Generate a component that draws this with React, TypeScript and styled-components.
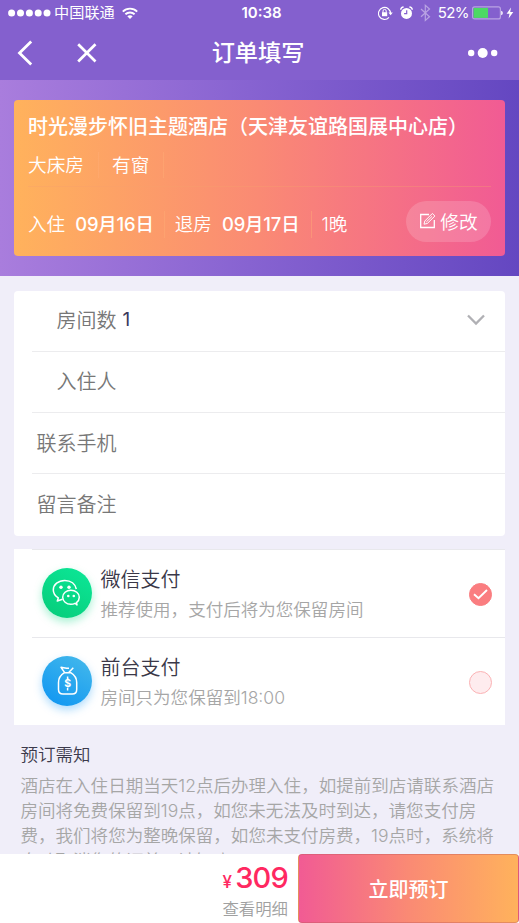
import React from "react";
import styled, { createGlobalStyle } from "styled-components";

const GlobalStyle = createGlobalStyle`
  * { box-sizing: border-box; }
  html, body { margin: 0; padding: 0; }
  body {
    font-family: Inter, "Noto Sans CJK SC", sans-serif;
    font-weight: 350;
    color: #3c3a4c;
    background: #f0eef9;
  }
  svg { display: block; flex: none; }
`;

const Screen = styled.div`
  width: 519px;
  height: 923px;
  display: flex;
  flex-direction: column;
  overflow: hidden;
  background: #f0eef9;
  white-space: nowrap;
`;

const StatusBar = styled.div`
  height: 26px;
  flex: none;
  display: grid;
  grid-template-columns: 1fr auto 1fr;
  align-items: center;
  padding: 0 5px 0 8px;
  background: #8460ce;
  color: #fff;
  font-size: 15px;
  line-height: 26px;
`;

const StatusGroup = styled.div<{ $end?: boolean }>`
  display: flex;
  align-items: center;
  justify-content: ${(p) => (p.$end ? "flex-end" : "flex-start")};
`;

const Carrier = styled.span`
  margin: 0 7px 0 3px;
  font-weight: 400;
  font-size: 15.2px;
`;

const Clock = styled.span`
  font-weight: 600;
  font-size: 15px;
  padding-left: 1px;
`;

const StatusIcons = styled.div`
  display: flex;
  align-items: center;
  gap: 7px;
`;

const Percent = styled.span`
  margin: 0 3px 0 7px;
  font-weight: 400;
  font-size: 15px;
  letter-spacing: -0.6px;
`;

const BoltSlot = styled.span`
  margin-left: 3px;
`;

const NavBar = styled.div`
  height: 54px;
  flex: none;
  display: grid;
  grid-template-columns: 1fr auto 1fr;
  align-items: center;
  padding: 0 21px 0 17px;
  background: #8460ce;
  color: #fff;
`;

const NavTitle = styled.h1`
  margin: 0;
  padding-left: 1px;
  font-size: 23.2px;
  font-weight: 500;
  line-height: 54px;
`;

const NavGroup = styled.div<{ $end?: boolean }>`
  display: flex;
  align-items: center;
  gap: 44px;
  justify-content: ${(p) => (p.$end ? "flex-end" : "flex-start")};
`;

const Hero = styled.section`
  height: 196px;
  flex: none;
  padding: 20px 14px;
  background: linear-gradient(90deg, #a97ddd 0%, #8763d1 48%, #6447c1 100%);
`;

const HotelCard = styled.div`
  height: 156px;
  padding: 12px 14px 0;
  border-radius: 4px;
  color: #fff;
  background: linear-gradient(90deg, #ffb25c 0%, #fa8a74 50%, #f15b94 100%);
`;

const HotelName = styled.h2`
  margin: 0;
  padding-top: 1px;
  font-size: 20px;
  font-weight: 500;
  line-height: 29px;
`;

const RoomRow = styled.div`
  height: 45px;
  padding: 10px 0 8px;
  display: flex;
  border-bottom: 1px solid rgba(245, 160, 110, 0.35);
`;

const RoomTag = styled.span`
  padding-right: 14px;
  margin-right: 13px;
  border-right: 1px solid rgba(255, 176, 120, 0.4);
  font-size: 18.7px;
  line-height: 27px;
`;

const StayRow = styled.div`
  display: flex;
  align-items: flex-start;
  padding-top: 14px;
`;

const StayItem = styled.span`
  height: 27px;
  margin-top: 10px;
  display: flex;
  padding-right: 10px;
  margin-right: 9.5px;
  border-right: 1px solid rgba(255, 176, 120, 0.4);
  font-size: 18.6px;
  line-height: 27px;
  &:nth-child(3) { border-right: 0; }
`;

const StayDate = styled.b`
  margin-left: 10px;
  width: 79px;
  font-weight: 500;
  font-size: 18.4px;
  letter-spacing: -0.15px;
`;

const EditButton = styled.button`
  width: 85px;
  height: 41px;
  margin-left: auto;
  padding: 0 0 3px;
  display: flex;
  align-items: center;
  justify-content: center;
  gap: 4px;
  border: 0;
  border-radius: 21px;
  background: rgba(255, 255, 255, 0.16);
  color: #fff;
  font: inherit;
  font-size: 18.7px;
`;

const FormCard = styled.section`
  height: 245px;
  flex: none;
  margin: 14.5px 14px 0;
  padding-left: 18px;
  border-radius: 4px;
  background: #fff;
  display: grid;
  grid-template-rows: repeat(4, 1fr);
`;

const FormRow = styled.div`
  display: flex;
  align-items: center;
  padding: 0 20px 2px 3.5px;
  border-bottom: 1px solid #ececee;
  color: #777;
  font-size: 20px;
  &:last-child { border-bottom: 0; }
`;

const FormLabel = styled.span`
  width: 81px;
  text-align: right;
`;

const FormValue = styled.span`
  flex: 1;
  margin-left: 6px;
  color: #3c3a5c;
  font-weight: 400;
  font-size: 19px;
`;

const PayCard = styled.section`
  height: 176px;
  flex: none;
  margin: 13.5px 14px 0;
  padding-left: 18px;
  background: #fff;
`;

const PayRow = styled.div`
  height: 88px;
  display: flex;
  align-items: center;
  padding: 0 13px 0 10px;
  border-top: 1px solid #e8e8ec;
`;

const PayIcon = styled.div<{ $from: string; $to: string; $glow: string }>`
  width: 50px;
  height: 50px;
  margin: 0 8.5px 2px 0;
  border-radius: 50%;
  background: linear-gradient(30deg, ${(p) => p.$from}, ${(p) => p.$to});
  box-shadow: 0 4px 9px ${(p) => p.$glow};
`;

const PayText = styled.div`
  flex: 1;
  padding-top: 2px;
`;

const PayName = styled.div`
  font-size: 20px;
  line-height: 30px;
  color: #3a3848;
`;

const PayHint = styled.div`
  font-size: 17.55px;
  line-height: 29px;
  color: #a6a6a6;
`;

const Radio = styled.span<{ $on?: boolean }>`
  width: 23px;
  height: 23px;
  margin-top: 2px;
  display: grid;
  place-items: center;
  border-radius: 50%;
  border: 1px solid ${(p) => (p.$on ? "#fa7d80" : "#fbb2b4")};
  background: ${(p) => (p.$on ? "#fa7d80" : "#feecee")};
`;

const Notice = styled.section`
  flex: 1;
  min-height: 0;
  overflow: hidden;
  padding: 17px 20px 0 20.5px;
`;

const NoticeTitle = styled.h3`
  margin: 0;
  font-size: 17.5px;
  font-weight: 350;
  line-height: 26px;
`;

const NoticeLine = styled.p`
  margin: 0;
  padding-top: 4.5px;
  font-size: 17.55px;
  line-height: 25px;
  color: #a6a6a6;
  & + & { padding-top: 0; }
`;

const Footer = styled.footer`
  height: 69px;
  flex: none;
  display: flex;
  background: #fff;
`;

const PriceBlock = styled.div`
  width: 298px;
  padding-right: 10px;
  text-align: right;
`;

const Price = styled.div`
  height: 42px;
  line-height: 48px;
  color: #ff2861;
  font-size: 29px;
  font-weight: 500;
  letter-spacing: -0.8px;
`;

const Currency = styled.span`
  margin-right: 4px;
  font-size: 17px;
`;

const Detail = styled.div`
  font-size: 16.4px;
  line-height: 26px;
  color: #a0a0a0;
`;

const BookButton = styled.button`
  flex: 1;
  padding: 0 0 1px;
  border: 1px solid rgba(190, 90, 90, 0.4);
  border-radius: 4px;
  color: #fff;
  font: inherit;
  font-size: 20px;
  font-weight: 500;
  background: linear-gradient(90deg, #f15b94 0%, #fa8a74 50%, #ffb25c 100%);
`;

const SignalDots = () => (
  <svg width="43" height="10" fill="#fff">
    {[3.6, 12.5, 21.4, 30.2, 39].map((x) => (
      <circle key={x} cx={x} cy="5" r="3.5" />
    ))}
  </svg>
);

const Wifi = () => (
  <svg width="16" height="13" viewBox="0 0 16 13" fill="none" stroke="#fff" strokeWidth="1.9">
    <path d="M.8 4.6C4.8 .6 11.2 .6 15.2 4.6" />
    <path d="M3.4 7.3C6 4.8 10 4.8 12.6 7.3" />
    <path d="M5.3 9.2C6.9 7.8 9.1 7.8 10.7 9.2L8 12Z" fill="#fff" stroke="none" />
  </svg>
);

const RotationLock = () => (
  <svg width="15" height="14" viewBox="0 0 15 14" fill="none" stroke="#fff">
    <path d="M11 11.4A6 6 0 1 1 12.500 7.6" strokeWidth="1.1" />
    <path d="M10.500 6.600H14.800L12.600 9.200Z" fill="#fff" stroke="none" />
    <rect x="4" y="6.200" width="5.200" height="4" fill="#fff" stroke="none" />
    <path d="M5 6.500V5a1.600 1.600 0 0 1 3.200 0V6.500" />
  </svg>
);

const Alarm = () => (
  <svg width="13" height="14" viewBox="0 0 13 14" fill="none">
    <circle cx="6.5" cy="7.4" r="5.5" fill="#fff" />
    <path d="M.7 3.700A3 3 0 0 1 3.600 1M12.300 3.700A3 3 0 0 0 9.400 1" stroke="#fff" strokeWidth="1.400" />
    <path d="M6.700 4.200V7.700H4.100" stroke="#8460ce" strokeWidth="1.200" />
  </svg>
);

const Bluetooth = () => (
  <svg width="11" height="18" viewBox="0 0 11 18" fill="none" stroke="#b9a3e3" strokeWidth="1.200">
    <path d="M1 5L9.500 12.800L5.300 16.500V1.300L9.500 5L1 12.800" />
  </svg>
);

const Battery = () => (
  <svg width="31" height="14" viewBox="0 0 31 14" fill="none">
    <rect x=".6" y=".9" width="27.800" height="12" rx="2" stroke="#b9a3e3" strokeWidth="1.200" />
    <rect x="1.600" y="1.900" width="14.400" height="10" fill="#4cd964" />
    <path d="M29.200 4.800Q30.800 5 30.800 7T29.200 9.200Z" fill="#fff" />
  </svg>
);

const Bolt = () => (
  <svg width="8" height="12" viewBox="0 0 8 12" fill="#fff">
    <path d="M5 .5L.6 6.700H3.500L2.600 11.600L7.300 5H4.200Z" />
  </svg>
);

const Back = () => (
  <svg width="16" height="26" viewBox="0 0 16 26" fill="none" stroke="#fff" strokeWidth="2.800">
    <path d="M14.200 1.500L2.500 13L14.200 24.500" />
  </svg>
);

const Close = () => (
  <svg width="20" height="20" viewBox="0 0 20 20" fill="none" stroke="#fff" strokeWidth="2.700">
    <path d="M1.200 1.200L18.500 18.500M18.500 1.200L1.200 18.500" />
  </svg>
);

const More = () => (
  <svg width="31" height="12" viewBox="0 0 31 12" fill="#fff">
    <circle cx="4.200" cy="6" r="3.200" />
    <circle cx="15.700" cy="6" r="5" />
    <circle cx="27.200" cy="6" r="3.200" />
  </svg>
);

const Edit = () => (
  <svg width="17" height="17" viewBox="0 0 17 17" fill="none" stroke="#fff" strokeWidth="1.300">
    <path d="M10 2.500H1.700V15.500H15.300V8" />
    <path d="M5 12.200L5.800 9L13.300 1.500L15.900 4L8.300 11.500ZM7.300 10L13 4.400" strokeWidth="1" />
  </svg>
);

const Chevron = () => (
  <svg width="18" height="12" viewBox="0 0 18 12" fill="none" stroke="#b0b0b4" strokeWidth="2.300">
    <path d="M1 1.500L9 9.500L17 1.500" />
  </svg>
);

const Check = () => (
  <svg width="15" height="11" viewBox="0 0 15 11" fill="none" stroke="#fff" strokeWidth="1.900">
    <path d="M1 5.300L5.500 9.300L14 1" />
  </svg>
);

const WeChat = () => (
  <svg width="50" height="50" viewBox="0 0 50 50" fill="none" stroke="#fff" strokeWidth="1.500" strokeLinejoin="round">
    <path d="M20.500 31.300L15.300 33L16.300 29.800C13 27.800 11.300 25.300 11.300 22C11.300 16.500 16.300 12.400 22.800 12.400C29 12.400 33.300 16 34.300 21" />
    <path d="M33 35.300C31.800 36 30.300 36.300 28.900 36.300C24.300 36.300 20.700 33.200 20.700 29.200S24.300 22.200 28.900 22.200S37.300 25.300 37.300 29.200C37.300 31.500 36.300 33.200 34.500 34.600L35 37Z" />
    <g fill="#fff" stroke="none">
      <circle cx="19" cy="19.300" r="1.700" />
      <circle cx="27" cy="19.300" r="1.700" />
      <circle cx="26.300" cy="28" r="1.300" />
      <circle cx="31.800" cy="28" r="1.300" />
    </g>
  </svg>
);

const DollarText = styled.text`
  font: 700 10.5px Inter, sans-serif;
  fill: #fff;
  stroke: none;
  text-anchor: middle;
`;

const MoneyBag = () => (
  <svg width="50" height="50" viewBox="0 0 50 50" fill="none" stroke="#fff" strokeWidth="1.500" strokeLinejoin="round">
    <path d="M22.700 16.700L19 11.300L24.500 12.200H27M26.500 16.700L31.300 11.800M22.500 16.700H28.700C32.500 19 34.700 22 34.700 26.500V33.500Q34.700 38 30.300 38H21Q16.500 38 16.500 33.500V26.500C16.500 22 18.700 19 22.500 16.700" />
    <path d="M25.600 20.500V23M25.600 32V34.500" />
    <DollarText x="25.600" y="31.300">$</DollarText>
  </svg>
);

const formRows = [
  { label: "房间数", value: "1", expandable: true },
  { label: "入住人" },
  { label: "联系手机" },
  { label: "留言备注" },
];

const noticeLines = [
  "酒店在入住日期当天12点后办理入住，如提前到店请联系酒店",
  "房间将免费保留到19点，如您未无法及时到达，请您支付房",
  "费，我们将您为整晚保留，如您未支付房费，19点时，系统将",
  "自动取消您的订单，请知晓。",
];

export default function App() {
  return (
    <Screen lang="zh-CN">
      <GlobalStyle />
      <StatusBar>
        <StatusGroup>
          <SignalDots />
          <Carrier>中国联通</Carrier>
          <Wifi />
        </StatusGroup>
        <Clock>10:38</Clock>
        <StatusGroup $end>
          <StatusIcons>
            <RotationLock />
            <Alarm />
            <Bluetooth />
          </StatusIcons>
          <Percent>52%</Percent>
          <Battery />
          <BoltSlot>
            <Bolt />
          </BoltSlot>
        </StatusGroup>
      </StatusBar>
      <NavBar>
        <NavGroup>
          <Back />
          <Close />
        </NavGroup>
        <NavTitle>订单填写</NavTitle>
        <NavGroup $end>
          <More />
        </NavGroup>
      </NavBar>
      <Hero>
        <HotelCard>
          <HotelName>时光漫步怀旧主题酒店（天津友谊路国展中心店）</HotelName>
          <RoomRow>
            <RoomTag>大床房</RoomTag>
            <RoomTag>有窗</RoomTag>
          </RoomRow>
          <StayRow>
            <StayItem>入住<StayDate>09月16日</StayDate></StayItem>
            <StayItem>退房<StayDate>09月17日</StayDate></StayItem>
            <StayItem>1晚</StayItem>
            <EditButton>
              <Edit />
              修改
            </EditButton>
          </StayRow>
        </HotelCard>
      </Hero>
      <FormCard>
        {formRows.map((row) => (
          <FormRow key={row.label}>
            <FormLabel>{row.label}</FormLabel>
            <FormValue>{row.value}</FormValue>
            {row.expandable && <Chevron />}
          </FormRow>
        ))}
      </FormCard>
      <PayCard>
        <PayRow>
          <PayIcon $from="#06cb79" $to="#0ce898" $glow="rgba(10, 215, 130, 0.35)">
            <WeChat />
          </PayIcon>
          <PayText>
            <PayName>微信支付</PayName>
            <PayHint>推荐使用，支付后将为您保留房间</PayHint>
          </PayText>
          <Radio $on>
            <Check />
          </Radio>
        </PayRow>
        <PayRow>
          <PayIcon $from="#0c94f2" $to="#46baeb" $glow="rgba(30, 155, 245, 0.35)">
            <MoneyBag />
          </PayIcon>
          <PayText>
            <PayName>前台支付</PayName>
            <PayHint>房间只为您保留到18:00</PayHint>
          </PayText>
          <Radio />
        </PayRow>
      </PayCard>
      <Notice>
        <NoticeTitle>预订需知</NoticeTitle>
        {noticeLines.map((line) => (
          <NoticeLine key={line}>{line}</NoticeLine>
        ))}
      </Notice>
      <Footer>
        <PriceBlock>
          <Price>
            <Currency>¥</Currency>309
          </Price>
          <Detail>查看明细</Detail>
        </PriceBlock>
        <BookButton>立即预订</BookButton>
      </Footer>
    </Screen>
  );
}
